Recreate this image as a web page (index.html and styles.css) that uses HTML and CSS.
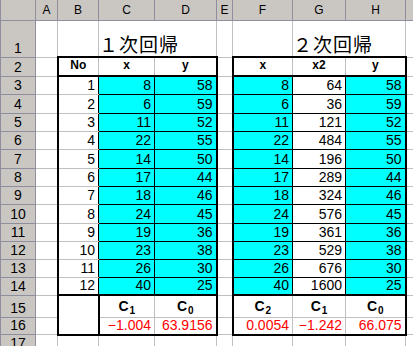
FILE: index.html
```html
<!DOCTYPE html>
<html lang="ja">
<head>
    <meta charset="UTF-8">
    <title>回帰</title>
    <link rel="stylesheet" href="styles.css">
</head>
<body>
    <table class="sheet">
        <colgroup>
            <col class="c-rh">
            <col class="c-a">
            <col class="c-b">
            <col class="c-c">
            <col class="c-d">
            <col class="c-e">
            <col class="c-f">
            <col class="c-g">
            <col class="c-h">
            <col class="c-i">
        </colgroup>

        <!-- column letters -->
        <tr class="col-head">
            <th class="corner"></th>
            <th>A</th><th>B</th><th>C</th><th>D</th><th>E</th>
            <th>F</th><th>G</th><th>H</th><th>I</th>
        </tr>

        <!-- titles -->
        <tr class="r-title">
            <th class="rh">1</th>
            <td></td><td></td>
            <td class="title" colspan="2">１次回帰</td>
            <td></td><td></td>
            <td class="title" colspan="2">２次回帰</td>
            <td></td>
        </tr>

        <!-- table headings -->
        <tr class="r-head">
            <th class="rh">2</th>
            <td></td>
            <td class="hd box-t box-l">No</td>
            <td class="hd box-t">x</td>
            <td class="hd box-t box-r">y</td>
            <td></td>
            <td class="hd box-t box-l">x</td>
            <td class="hd box-t">x2</td>
            <td class="hd box-t box-r">y</td>
            <td></td>
        </tr>

        <tr class="r-data">
            <th class="rh">3</th><td></td>
            <td class="no box-l">1</td><td class="cyan">8</td><td class="cyan box-r">58</td><td></td>
            <td class="cyan box-l">8</td><td class="line">64</td><td class="cyan box-r">58</td><td></td>
        </tr>
        <tr class="r-data tall">
            <th class="rh">4</th><td></td>
            <td class="no box-l">2</td><td class="cyan">6</td><td class="cyan box-r">59</td><td></td>
            <td class="cyan box-l">6</td><td class="line">36</td><td class="cyan box-r">59</td><td></td>
        </tr>
        <tr class="r-data">
            <th class="rh">5</th><td></td>
            <td class="no box-l">3</td><td class="cyan">11</td><td class="cyan box-r">52</td><td></td>
            <td class="cyan box-l">11</td><td class="line">121</td><td class="cyan box-r">52</td><td></td>
        </tr>
        <tr class="r-data">
            <th class="rh">6</th><td></td>
            <td class="no box-l">4</td><td class="cyan">22</td><td class="cyan box-r">55</td><td></td>
            <td class="cyan box-l">22</td><td class="line">484</td><td class="cyan box-r">55</td><td></td>
        </tr>
        <tr class="r-data tall">
            <th class="rh">7</th><td></td>
            <td class="no box-l">5</td><td class="cyan">14</td><td class="cyan box-r">50</td><td></td>
            <td class="cyan box-l">14</td><td class="line">196</td><td class="cyan box-r">50</td><td></td>
        </tr>
        <tr class="r-data">
            <th class="rh">8</th><td></td>
            <td class="no box-l">6</td><td class="cyan">17</td><td class="cyan box-r">44</td><td></td>
            <td class="cyan box-l">17</td><td class="line">289</td><td class="cyan box-r">44</td><td></td>
        </tr>
        <tr class="r-data">
            <th class="rh">9</th><td></td>
            <td class="no box-l">7</td><td class="cyan">18</td><td class="cyan box-r">46</td><td></td>
            <td class="cyan box-l">18</td><td class="line">324</td><td class="cyan box-r">46</td><td></td>
        </tr>
        <tr class="r-data tall">
            <th class="rh">10</th><td></td>
            <td class="no box-l">8</td><td class="cyan">24</td><td class="cyan box-r">45</td><td></td>
            <td class="cyan box-l">24</td><td class="line">576</td><td class="cyan box-r">45</td><td></td>
        </tr>
        <tr class="r-data">
            <th class="rh">11</th><td></td>
            <td class="no box-l">9</td><td class="cyan">19</td><td class="cyan box-r">36</td><td></td>
            <td class="cyan box-l">19</td><td class="line">361</td><td class="cyan box-r">36</td><td></td>
        </tr>
        <tr class="r-data">
            <th class="rh">12</th><td></td>
            <td class="no box-l">10</td><td class="cyan">23</td><td class="cyan box-r">38</td><td></td>
            <td class="cyan box-l">23</td><td class="line">529</td><td class="cyan box-r">38</td><td></td>
        </tr>
        <tr class="r-data">
            <th class="rh">13</th><td></td>
            <td class="no box-l">11</td><td class="cyan">26</td><td class="cyan box-r">30</td><td></td>
            <td class="cyan box-l">26</td><td class="line">676</td><td class="cyan box-r">30</td><td></td>
        </tr>
        <tr class="r-data">
            <th class="rh">14</th><td></td>
            <td class="no box-l box-b">12</td><td class="cyan box-b">40</td><td class="cyan box-r box-b">25</td><td></td>
            <td class="cyan box-l box-b">40</td><td class="line box-b">1600</td><td class="cyan box-r box-b">25</td><td></td>
        </tr>

        <!-- coefficients -->
        <tr class="r-coef">
            <th class="rh">15</th><td></td>
            <td class="box-l box-r box-b" rowspan="2"></td>
            <td class="cf">C<sub>1</sub></td>
            <td class="cf box-r">C<sub>0</sub></td>
            <td></td>
            <td class="cf box-l">C<sub>2</sub></td>
            <td class="cf">C<sub>1</sub></td>
            <td class="cf box-r">C<sub>0</sub></td>
            <td></td>
        </tr>
        <tr class="r-val">
            <th class="rh">16</th><td></td>
            <td class="val box-b">−1.004</td>
            <td class="val box-r box-b">63.9156</td>
            <td></td>
            <td class="val box-l box-b">0.0054</td>
            <td class="val box-b">−1.242</td>
            <td class="val box-r box-b">66.075</td>
            <td></td>
        </tr>

        <tr class="r-data">
            <th class="rh">17</th>
            <td></td><td></td><td></td><td></td><td></td>
            <td></td><td></td><td></td><td></td>
        </tr>
    </table>
</body>
</html>
```

FILE: styles.css
```css
/* Sheet */
body {
    margin: 0;
    background: #fff;
    overflow: hidden;
    font-family: "Liberation Sans", Arial, sans-serif;
}

.sheet {
    border-collapse: collapse;
    table-layout: fixed;
    width: 469px;
    font-size: 14px;
    line-height: 15px;
    color: #000;
}

/* column widths */
.c-rh { width: 35px; }
.c-a { width: 22px; }
.c-b { width: 41px; }
.c-c { width: 56px; }
.c-d { width: 62px; }
.c-e { width: 16px; }
.c-f { width: 60px; }
.c-g { width: 53px; }
.c-h { width: 60px; }
.c-i { width: 64px; }

/* row heights */
.col-head { height: 20px; }
.r-title { height: 37px; }
.r-head { height: 19px; }
.r-data { height: 18px; }
.r-data.tall { height: 19px; }
.r-coef { height: 22px; }
.r-val { height: 17px; }

.sheet td {
    border: 1px solid #c0c0c0;
    padding: 0 3px 1px 2px;
    vertical-align: bottom;
    text-align: right;
    white-space: nowrap;
    overflow: hidden;
}

/* row and column headings */
.sheet th {
    background: #cac7c2;
    border: 1px solid #8e8e9e;
    padding: 0 0 1px;
    font-weight: normal;
    vertical-align: bottom;
    text-align: center;
    overflow: hidden;
}

.col-head th {
    font-size: 12px;
    border-top: none;
    padding-bottom: 2px;
}

.rh {
    font-size: 14px;
}

.sheet td.title {
    font-family: "Noto Sans CJK JP", sans-serif;
    font-size: 19px;
    line-height: 22px;
    letter-spacing: 1px;
    text-align: left;
    padding-left: 0;
    padding-bottom: 1px;
}

.sheet td.hd {
    font-weight: bold;
    font-size: 12px;
    text-align: center;
    padding: 0 0 2px;
    border-bottom: 2px solid #000;
}

.sheet td.cyan {
    background: #00ffff;
    border: 1px solid #000;
}

.sheet td.line {
    border: 1px solid #000;
}

.sheet td.no {
    border-right: 1px solid #000;
}

.sheet td.cf {
    font-weight: bold;
    font-size: 14px;
    text-align: center;
    padding: 0 0 3px;
}

.cf sub {
    font-size: 10px;
    line-height: 0;
    vertical-align: -3px;
    margin-left: 1px;
}

.val {
    color: #f00;
}

/* thick range outlines */
.sheet td.box-t { border-top: 2px solid #000; }
.sheet td.box-b { border-bottom: 2px solid #000; }
.sheet td.box-l { border-left: 2px solid #000; }
.sheet td.box-r { border-right: 2px solid #000; }
```
